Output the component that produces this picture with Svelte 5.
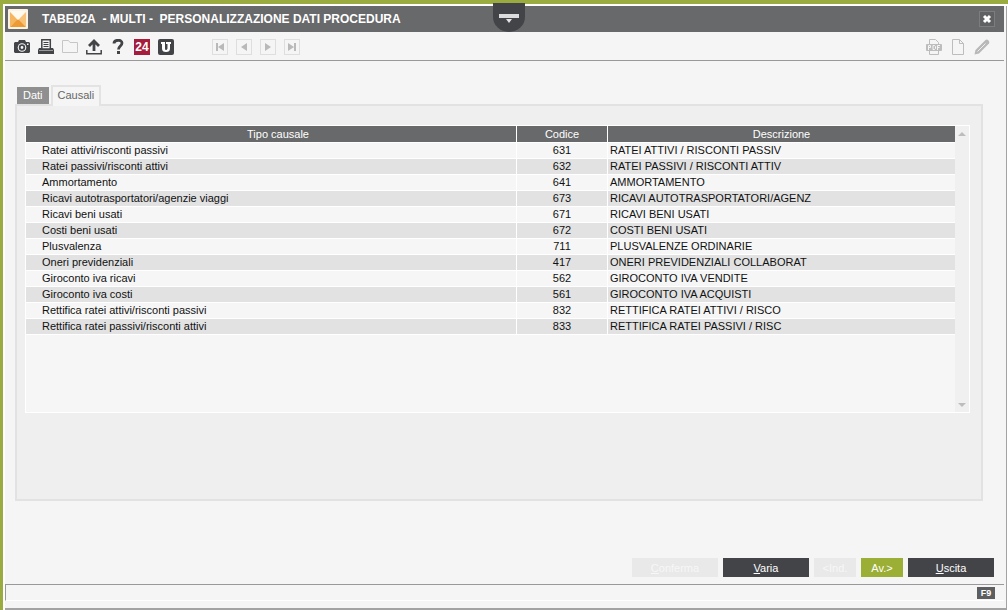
<script>
  const rows = [
    ['Ratei attivi/risconti passivi', '631', 'RATEI ATTIVI / RISCONTI PASSIV'],
    ['Ratei passivi/risconti attivi', '632', 'RATEI PASSIVI / RISCONTI ATTIV'],
    ['Ammortamento', '641', 'AMMORTAMENTO'],
    ['Ricavi autotrasportatori/agenzie viaggi', '673', 'RICAVI AUTOTRASPORTATORI/AGENZ'],
    ['Ricavi beni usati', '671', 'RICAVI BENI USATI'],
    ['Costi beni usati', '672', 'COSTI BENI USATI'],
    ['Plusvalenza', '711', 'PLUSVALENZE ORDINARIE'],
    ['Oneri previdenziali', '417', 'ONERI PREVIDENZIALI COLLABORAT'],
    ['Giroconto iva ricavi', '562', 'GIROCONTO IVA VENDITE'],
    ['Giroconto iva costi', '561', 'GIROCONTO IVA ACQUISTI'],
    ['Rettifica ratei attivi/risconti passivi', '832', 'RETTIFICA RATEI ATTIVI / RISCO'],
    ['Rettifica ratei passivi/risconti attivi', '833', 'RETTIFICA RATEI PASSIVI / RISC'],
  ];

  const navButtons = [
    { label: 'Primo', d: 'M4 4h2v8H4zM12 4v8L6 8z' },
    { label: 'Precedente', d: 'M11 4v8L5 8z' },
    { label: 'Successivo', d: 'M5 4v8l6-4z' },
    { label: 'Ultimo', d: 'M10 4h2v8h-2zM4 4v8l6-4z' },
  ];

  let activeTab = $state('Causali');
</script>

<div class="window">
  <header class="titlebar">
    <svg class="logo" viewBox="0 0 20 20" aria-hidden="true">
      <rect width="20" height="20" rx="1" fill="#fdf3e4" />
      <path d="M2 3l8 8-8 7z" fill="#f6b65f" />
      <path d="M18 3l-8 8 8 7z" fill="#f9c37a" />
      <path d="M2 18l8-8 8 8z" fill="#ee9a34" />
      <path d="M2 2h16l-8 9z" fill="#fffaf0" />
    </svg>
    <h1>TABE02A&nbsp; - MULTI -&nbsp; PERSONALIZZAZIONE DATI PROCEDURA</h1>
    <button type="button" class="pull" aria-label="Menu">
      <svg viewBox="0 0 32 29" aria-hidden="true">
        <path d="M0 0h32v14a16 15 0 0 1-32 0z" fill="#434448" />
        <path d="M6 11h20v4H6z" fill="#dcdcde" />
        <path d="M13 16h6l-3 4z" fill="#e4e4e6" />
      </svg>
    </button>
    <button type="button" class="close" aria-label="Chiudi">
      <svg viewBox="0 0 16 16" aria-hidden="true">
        <rect x="0.5" y="0.5" width="15" height="15" fill="#606163" stroke="#7c7d7f" />
        <path d="M5 5l6 6M11 5l-6 6" stroke="#fff" stroke-width="3" />
      </svg>
    </button>
  </header>

  <div class="toolbar">
    <div class="tools">
      <button type="button" aria-label="Istantanea">
        <svg viewBox="0 0 16 16"><path d="M1 3h3l1-2h6l1 2h3l1 1v9l-1 1H1l-1-1V4z" fill="#434448" /><circle cx="8" cy="8.500" r="4.300" fill="#f5f5f5" /><circle cx="8" cy="8.500" r="2.300" fill="none" stroke="#434448" stroke-width="1.800" /><path d="M13 4.500h1.500V6H13z" fill="#f5f5f5" /></svg>
      </button>
      <button type="button" aria-label="Stampa">
        <svg viewBox="0 0 16 16"><path d="M3.800.8h8.500V10H3.800z" fill="#f5f5f5" stroke="#434448" stroke-width="1.500" /><path d="M5.500 3.500h5M5.500 5.500h5M5.500 7.500h5" stroke="#434448" /><path d="M1 9h2v1h10V9h2l1 2v4H0v-4z" fill="#434448" /><path d="M1 11.500h14" stroke="#999" /></svg>
      </button>
      <button type="button" aria-label="Apri" disabled>
        <svg viewBox="0 0 16 16"><path d="M.5 13.500V1.500h6l1.500 2h7.500v10z" fill="none" stroke="#c6c6c6" /></svg>
      </button>
      <button type="button" aria-label="Esporta">
        <svg viewBox="0 0 16 16"><path d="M8 12V3M3 7l5-5 5 5" fill="none" stroke="#434448" stroke-width="2.800" /><path d="M.8 11v3.700h14.400V11" fill="none" stroke="#434448" stroke-width="1.500" /></svg>
      </button>
      <button type="button" aria-label="Guida">
        <svg viewBox="0 0 16 16"><path d="M4 4.500c0-4 8-4.500 8-.5 0 3-3.500 3-3.500 6.500" fill="none" stroke="#434448" stroke-width="2.800" /><path d="M7 12h3v3H7z" fill="#434448" /></svg>
      </button>
      <button type="button" class="news">24</button>
      <button type="button" aria-label="Unico">
        <svg viewBox="0 0 16 16"><rect width="16" height="16" rx="2" fill="#434448" /><path d="M3 3h4v6.500q0 1.500 1 1.500t1.500-1.500V5H8V3h5v2h-1v4.500Q12 13 8 13T4 9.500V5H3z" fill="#fff" /></svg>
      </button>
    </div>
    <div class="tools">
      {#each navButtons as nav}
        <button type="button" aria-label={nav.label} disabled>
          <svg viewBox="0 0 16 16"><rect x=".5" y=".5" width="15" height="15" fill="none" stroke="#dedede" /><path d={nav.d} fill="#b9b9b9" /></svg>
        </button>
      {/each}
    </div>
    <div class="tools tools-right">
      <button type="button" aria-label="PDF" disabled>
        <svg viewBox="0 0 16 16"><path d="M3.500 6V.5h6l3 3V6M3.500 12v3.500h9V12" fill="none" stroke="#bdbdbd" /><rect y="5" width="16" height="7" rx="1" fill="#bdbdbd" /><path d="M2.500 11V6.500h2v2h-2M7 6.500h1.500l1 1v2l-1 1H7zM11.500 11V6.500H14M11.500 8.500h2" fill="none" stroke="#f5f5f5" /></svg>
      </button>
      <button type="button" aria-label="Nuovo" disabled>
        <svg viewBox="0 0 16 16"><path d="M2.500.5h7l4 4v11h-11zM9.500.5v4h4" fill="none" stroke="#bdbdbd" /></svg>
      </button>
      <button type="button" aria-label="Modifica" disabled>
        <svg viewBox="0 0 16 16"><path d="M.5 15.500l1-4.500L11.500 1q1.500-1 3 .5t.5 3L5 14.500z" fill="#b8b8b8" /><path d="M3.500 12.500L11.500 4.500" stroke="#eee" /></svg>
      </button>
    </div>
  </div>

  <main>
    <div class="tabs" role="tablist">
      {#each ['Dati', 'Causali'] as tab}
        <button
          type="button"
          role="tab"
          class:active={activeTab === tab}
          aria-selected={activeTab === tab}
          onclick={() => (activeTab = tab)}
        >{tab}</button>
      {/each}
    </div>

    <section class="panel">
      <div class="grid">
        <table>
          <colgroup>
            <col class="col-type" />
            <col class="col-code" />
            <col />
          </colgroup>
          <thead>
            <tr><th class="type">Tipo causale</th><th>Codice</th><th>Descrizione</th></tr>
          </thead>
          <tbody>
            {#each rows as [type, code, description]}
              <tr>
                <td class="type">{type}</td>
                <td class="code">{code}</td>
                <td>{description}</td>
              </tr>
            {/each}
          </tbody>
        </table>
        <div class="scroll" aria-hidden="true">
          <svg viewBox="0 0 8 4"><path d="M0 4l4-4 4 4z" /></svg>
          <svg viewBox="0 0 8 4"><path d="M0 0h8L4 4z" /></svg>
        </div>
      </div>
    </section>

    <div class="actions">
      <button type="button" class="wide" disabled><u>C</u>onferma</button>
      <button type="button" class="wide"><u>V</u>aria</button>
      <button type="button" disabled>&lt;Ind.</button>
      <button type="button" class="next">Av.&gt;</button>
      <button type="button" class="wide"><u>U</u>scita</button>
    </div>
  </main>

  <footer><kbd>F9</kbd></footer>
</div>

<style>
  :global(body) {
    background: #f5f5f5;
  }

  .window,
  .window * {
    box-sizing: border-box;
  }

  .window {
    display: flex;
    flex-direction: column;
    min-height: 100vh;
    padding: 2px 2px 0;
    border-top: 4px solid #9aac40;
    border-left: 3px solid #9aac40;
    background: #f5f5f5;
    box-shadow: inset 2px 2px #fff, inset -1px 0 #fff, inset -2px -2px #a3a3a3;
    font-family: "Liberation Sans", Arial, sans-serif;
    font-size: 11px;
    line-height: 15px;
    color: #111;
  }

  button {
    padding: 0;
    border: 0;
    background: none;
    font: inherit;
    color: inherit;
  }

  svg {
    display: block;
    width: 100%;
    height: 100%;
  }

  .titlebar {
    position: relative;
    display: flex;
    align-items: center;
    height: 26px;
    margin-right: 2px;
    padding: 0 9px 0 3px;
    background: #68696b;
    color: #fff;
  }

  .logo {
    width: 20px;
    height: 20px;
  }

  h1 {
    flex: 1;
    margin: 0 0 0 14px;
    font-size: 12px;
    white-space: nowrap;
  }

  .pull {
    position: absolute;
    top: -3px;
    left: calc(50% - 12px);
    width: 32px;
    height: 29px;
  }

  .close {
    width: 16px;
    height: 16px;
  }

  .toolbar {
    display: flex;
    align-items: center;
    gap: 38px;
    height: 29px;
    margin-right: 2px;
    padding: 1px 14px 0 9px;
    border-bottom: 1px solid #999;
  }

  .tools {
    display: flex;
    gap: 8px;
  }

  .tools button {
    width: 16px;
    height: 16px;
  }

  .tools-right {
    margin-left: auto;
  }

  .tools .news {
    background: #a51c3c;
    color: #fff;
    font-size: 12px;
    font-weight: bold;
    line-height: 17px;
  }

  main {
    flex: 1;
    display: flex;
    flex-direction: column;
    padding: 24px 12px 7px 10px;
  }

  .tabs {
    display: flex;
    gap: 2px;
  }

  .tabs button {
    height: 17px;
    margin: 2px 0 0 2px;
    padding: 0 6px;
    background: #8f8f8f;
    color: #fff;
  }

  .tabs .active {
    position: relative;
    height: 21px;
    margin: 0 0 -2px;
    padding: 0 5px 2px;
    border: 2px solid #e3e3e3;
    border-bottom: 0;
    background: #f5f5f5;
    color: #666;
  }

  .panel {
    flex: 1;
    display: flex;
    margin-right: 11px;
    padding: 19px 11px 86px 8px;
    border: 2px solid #e2e2e2;
    background: #efefef;
  }

  .grid {
    flex: 1;
    display: flex;
    align-items: flex-start;
    border: 1px solid #fff;
    background: #f6f6f6;
  }

  table {
    flex: 1;
    table-layout: fixed;
    border-collapse: separate;
    border-spacing: 0;
  }

  .col-type {
    width: 491px;
  }

  .col-code {
    width: 91px;
  }

  th,
  td {
    height: 16px;
    padding: 0 2px;
    border-bottom: 1px solid #fff;
    overflow: hidden;
    white-space: nowrap;
  }

  th:not(:last-child),
  td:not(:last-child) {
    border-right: 1px solid #fff;
  }

  th {
    height: 17px;
    background: #68696b;
    color: #fff;
    font-weight: normal;
  }

  tbody tr:nth-child(even) {
    background: #e2e2e2;
  }

  .type {
    padding-left: 16px;
  }

  .code {
    text-align: center;
  }

  .scroll {
    display: flex;
    flex-direction: column;
    align-items: center;
    align-self: stretch;
    justify-content: space-between;
    width: 14px;
    padding: 6px 0 5px;
    background: #f0f0f0;
  }

  .scroll svg {
    width: 8px;
    height: 4px;
    fill: #bdbdbd;
  }

  .actions {
    display: flex;
    justify-content: flex-end;
    gap: 5px;
    margin-top: 57px;
  }

  .actions button {
    width: 42px;
    height: 19px;
    padding-top: 2px;
    background: #434448;
    color: #fff;
  }

  .actions .wide {
    width: 86px;
  }

  .actions .next {
    background: #9bae35;
  }

  .actions button:disabled {
    background: #e9e9e9;
    color: #f7f7f7;
  }

  footer {
    display: flex;
    justify-content: flex-end;
    height: 17px;
    margin: 0 2px 9px 0;
    padding: 2px 9px 0 0;
    border-top: 1px solid #999;
    border-left: 1px solid #999;
    border-bottom: 1px solid #fff;
  }

  kbd {
    width: 18px;
    height: 12px;
    background: #5d5e60;
    color: #fff;
    font: bold 9px/12px "Liberation Sans", Arial, sans-serif;
    text-align: center;
  }
</style>
